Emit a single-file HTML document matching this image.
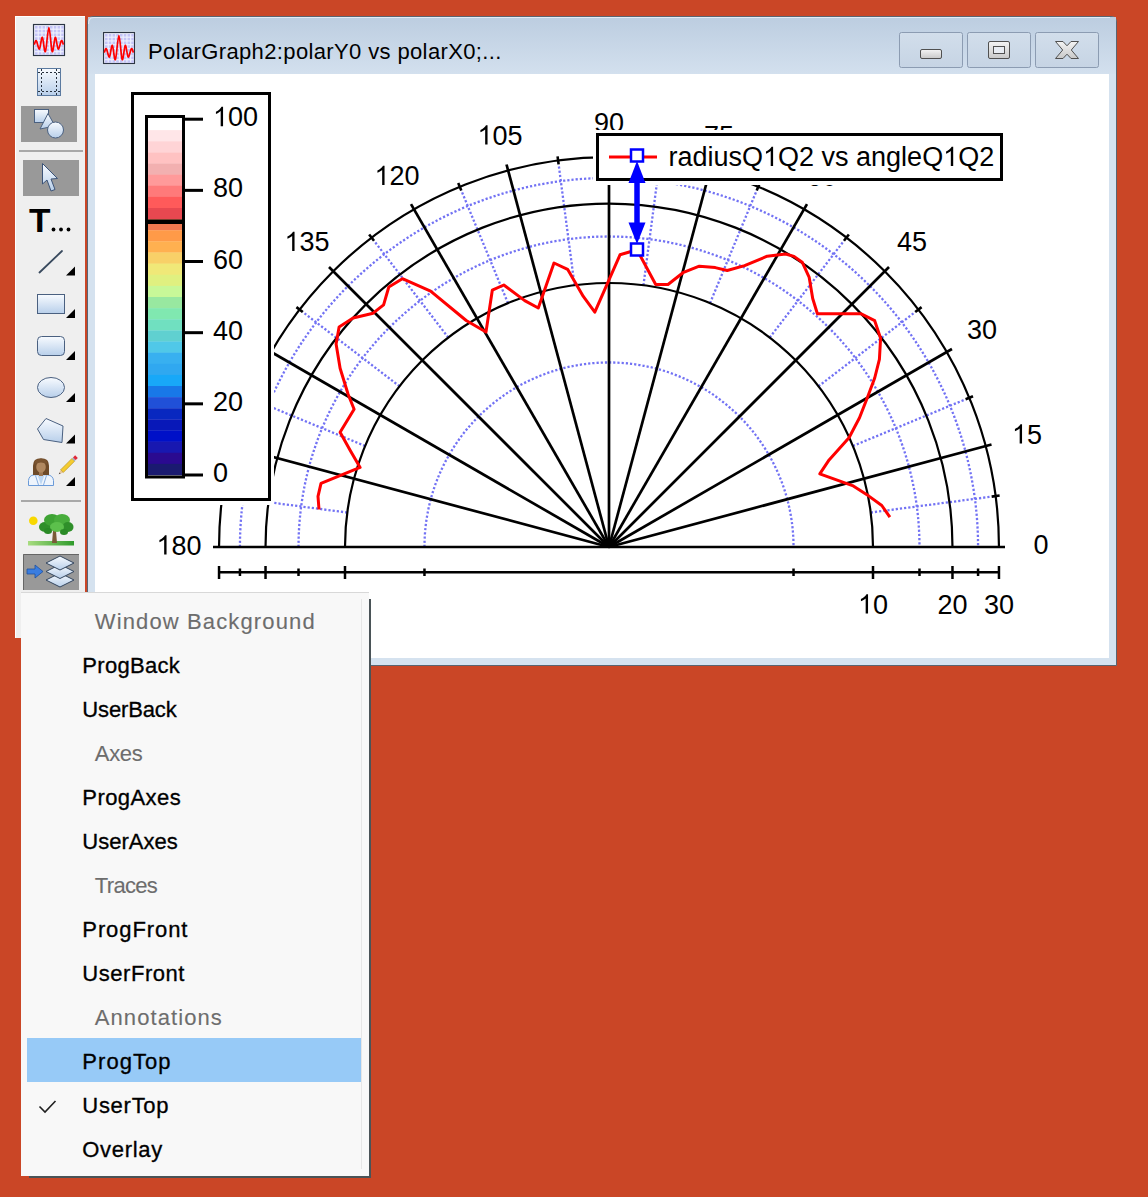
<!DOCTYPE html>
<html><head><meta charset="utf-8"><style>
html,body{margin:0;padding:0;}
body{width:1148px;height:1197px;background:#ca4626;overflow:hidden;position:relative;}
svg{position:absolute;left:0;top:0;}
</style></head><body>
<svg width="1148" height="1197" viewBox="0 0 1148 1197">
<defs><linearGradient id="tb" x1="0" y1="0" x2="0" y2="1"><stop offset="0" stop-color="#bccde0"/><stop offset="1" stop-color="#d3e0ee"/></linearGradient><linearGradient id="btn" x1="0" y1="0" x2="0" y2="1"><stop offset="0" stop-color="#d2deeb"/><stop offset="1" stop-color="#c6d4e4"/></linearGradient><linearGradient id="glyph" x1="0" y1="0" x2="0" y2="1"><stop offset="0" stop-color="#f4f4f4"/><stop offset="1" stop-color="#c8c8c8"/></linearGradient><linearGradient id="ico" x1="0" y1="0" x2="0" y2="1"><stop offset="0" stop-color="#f8fbff"/><stop offset="1" stop-color="#b8cfea"/></linearGradient><clipPath id="client"><rect x="95" y="74" width="1014" height="584"/></clipPath></defs><path d="M87.5,665.5 V22 Q87.5,16.5 93,16.5 H1111 Q1116.5,16.5 1116.5,22 V665.5 Z" fill="#d5e2ef" stroke="#5a6470" stroke-width="1"/><rect x="88" y="17" width="1028" height="57" fill="url(#tb)"/><rect x="95" y="74" width="1014" height="584" fill="#ffffff"/><path d="M88.5,24 Q88.5,17.5 94,17.5 H1110" fill="none" stroke="#ffffff" stroke-width="1" opacity="0.6"/><rect x="102.5" y="31.5" width="33" height="33" fill="#ffffff" opacity="0.7"/><rect x="103.5" y="32.5" width="31" height="31" fill="#eef0fe" stroke="#2c3644" stroke-width="1.2"/><rect x="105.00" y="34.00" width="2.6" height="2.6" fill="#c4c4f6"/><rect x="105.00" y="37.75" width="2.6" height="2.6" fill="#c4c4f6"/><rect x="105.00" y="41.50" width="2.6" height="2.6" fill="#c4c4f6"/><rect x="105.00" y="45.25" width="2.6" height="2.6" fill="#c4c4f6"/><rect x="105.00" y="49.00" width="2.6" height="2.6" fill="#c4c4f6"/><rect x="105.00" y="52.75" width="2.6" height="2.6" fill="#c4c4f6"/><rect x="105.00" y="56.50" width="2.6" height="2.6" fill="#c4c4f6"/><rect x="105.00" y="60.25" width="2.6" height="2.6" fill="#c4c4f6"/><rect x="108.75" y="34.00" width="2.6" height="2.6" fill="#c4c4f6"/><rect x="108.75" y="37.75" width="2.6" height="2.6" fill="#c4c4f6"/><rect x="108.75" y="41.50" width="2.6" height="2.6" fill="#c4c4f6"/><rect x="108.75" y="45.25" width="2.6" height="2.6" fill="#c4c4f6"/><rect x="108.75" y="49.00" width="2.6" height="2.6" fill="#c4c4f6"/><rect x="108.75" y="52.75" width="2.6" height="2.6" fill="#c4c4f6"/><rect x="108.75" y="56.50" width="2.6" height="2.6" fill="#c4c4f6"/><rect x="108.75" y="60.25" width="2.6" height="2.6" fill="#c4c4f6"/><rect x="112.50" y="34.00" width="2.6" height="2.6" fill="#c4c4f6"/><rect x="112.50" y="37.75" width="2.6" height="2.6" fill="#c4c4f6"/><rect x="112.50" y="41.50" width="2.6" height="2.6" fill="#c4c4f6"/><rect x="112.50" y="45.25" width="2.6" height="2.6" fill="#c4c4f6"/><rect x="112.50" y="49.00" width="2.6" height="2.6" fill="#c4c4f6"/><rect x="112.50" y="52.75" width="2.6" height="2.6" fill="#c4c4f6"/><rect x="112.50" y="56.50" width="2.6" height="2.6" fill="#c4c4f6"/><rect x="112.50" y="60.25" width="2.6" height="2.6" fill="#c4c4f6"/><rect x="116.25" y="34.00" width="2.6" height="2.6" fill="#c4c4f6"/><rect x="116.25" y="37.75" width="2.6" height="2.6" fill="#c4c4f6"/><rect x="116.25" y="41.50" width="2.6" height="2.6" fill="#c4c4f6"/><rect x="116.25" y="45.25" width="2.6" height="2.6" fill="#c4c4f6"/><rect x="116.25" y="49.00" width="2.6" height="2.6" fill="#c4c4f6"/><rect x="116.25" y="52.75" width="2.6" height="2.6" fill="#c4c4f6"/><rect x="116.25" y="56.50" width="2.6" height="2.6" fill="#c4c4f6"/><rect x="116.25" y="60.25" width="2.6" height="2.6" fill="#c4c4f6"/><rect x="120.00" y="34.00" width="2.6" height="2.6" fill="#c4c4f6"/><rect x="120.00" y="37.75" width="2.6" height="2.6" fill="#c4c4f6"/><rect x="120.00" y="41.50" width="2.6" height="2.6" fill="#c4c4f6"/><rect x="120.00" y="45.25" width="2.6" height="2.6" fill="#c4c4f6"/><rect x="120.00" y="49.00" width="2.6" height="2.6" fill="#c4c4f6"/><rect x="120.00" y="52.75" width="2.6" height="2.6" fill="#c4c4f6"/><rect x="120.00" y="56.50" width="2.6" height="2.6" fill="#c4c4f6"/><rect x="120.00" y="60.25" width="2.6" height="2.6" fill="#c4c4f6"/><rect x="123.75" y="34.00" width="2.6" height="2.6" fill="#c4c4f6"/><rect x="123.75" y="37.75" width="2.6" height="2.6" fill="#c4c4f6"/><rect x="123.75" y="41.50" width="2.6" height="2.6" fill="#c4c4f6"/><rect x="123.75" y="45.25" width="2.6" height="2.6" fill="#c4c4f6"/><rect x="123.75" y="49.00" width="2.6" height="2.6" fill="#c4c4f6"/><rect x="123.75" y="52.75" width="2.6" height="2.6" fill="#c4c4f6"/><rect x="123.75" y="56.50" width="2.6" height="2.6" fill="#c4c4f6"/><rect x="123.75" y="60.25" width="2.6" height="2.6" fill="#c4c4f6"/><rect x="127.50" y="34.00" width="2.6" height="2.6" fill="#c4c4f6"/><rect x="127.50" y="37.75" width="2.6" height="2.6" fill="#c4c4f6"/><rect x="127.50" y="41.50" width="2.6" height="2.6" fill="#c4c4f6"/><rect x="127.50" y="45.25" width="2.6" height="2.6" fill="#c4c4f6"/><rect x="127.50" y="49.00" width="2.6" height="2.6" fill="#c4c4f6"/><rect x="127.50" y="52.75" width="2.6" height="2.6" fill="#c4c4f6"/><rect x="127.50" y="56.50" width="2.6" height="2.6" fill="#c4c4f6"/><rect x="127.50" y="60.25" width="2.6" height="2.6" fill="#c4c4f6"/><rect x="131.25" y="34.00" width="2.6" height="2.6" fill="#c4c4f6"/><rect x="131.25" y="37.75" width="2.6" height="2.6" fill="#c4c4f6"/><rect x="131.25" y="41.50" width="2.6" height="2.6" fill="#c4c4f6"/><rect x="131.25" y="45.25" width="2.6" height="2.6" fill="#c4c4f6"/><rect x="131.25" y="49.00" width="2.6" height="2.6" fill="#c4c4f6"/><rect x="131.25" y="52.75" width="2.6" height="2.6" fill="#c4c4f6"/><rect x="131.25" y="56.50" width="2.6" height="2.6" fill="#c4c4f6"/><rect x="131.25" y="60.25" width="2.6" height="2.6" fill="#c4c4f6"/><path d="M104.30,52.70 C104.63,52.02 105.45,47.87 106.30,48.60 C107.15,49.33 108.40,57.63 109.40,57.10 C110.40,56.57 111.30,44.98 112.30,45.40 C113.30,45.82 114.30,61.25 115.40,59.60 C116.50,57.95 117.77,35.50 118.90,35.50 C120.03,35.50 121.13,57.95 122.20,59.60 C123.27,61.25 124.30,45.82 125.30,45.40 C126.30,44.98 127.18,56.57 128.20,57.10 C129.22,57.63 130.53,49.33 131.40,48.60 C132.27,47.87 133.07,52.02 133.40,52.70" fill="none" stroke="#ff0000" stroke-width="1.7" stroke-linejoin="round"/><text x="148" y="58.5" font-family='"Liberation Sans", sans-serif' font-size="22" letter-spacing="0.37" fill="#000">PolarGraph2:polarY0 vs polarX0;...</text><rect x="899.5" y="32.5" width="63" height="35" rx="2" fill="url(#btn)" stroke="#8c9cb2" stroke-width="1"/><rect x="967.5" y="32.5" width="63" height="35" rx="2" fill="url(#btn)" stroke="#8c9cb2" stroke-width="1"/><rect x="1035.5" y="32.5" width="63" height="35" rx="2" fill="url(#btn)" stroke="#8c9cb2" stroke-width="1"/><rect x="920.5" y="49.5" width="21" height="9" rx="1.5" fill="url(#glyph)" stroke="#505050" stroke-width="1"/><rect x="988.5" y="41.5" width="21" height="17" rx="1.5" fill="url(#glyph)" stroke="#505050" stroke-width="1"/><rect x="993.5" y="46.5" width="11" height="7" fill="#e8ecf2" stroke="#505050" stroke-width="1"/><path d="M1055.5,41.5 L1063,41.5 L1067,45.8 L1071,41.5 L1078.5,41.5 L1071.3,50 L1078.5,58.5 L1071,58.5 L1067,54.2 L1063,58.5 L1055.5,58.5 L1062.7,50 Z" fill="url(#glyph)" stroke="#505050" stroke-width="1" stroke-linejoin="round"/><g clip-path="url(#client)"><path d="M424.47,547.0 A184.53,184.53 0 0 1 793.53,547.0" fill="none" stroke="#7272f4" stroke-width="2.3" stroke-dasharray="2.2 2"/><path d="M298.51,547.0 A310.49,310.49 0 0 1 919.49,547.0" fill="none" stroke="#7272f4" stroke-width="2.3" stroke-dasharray="2.2 2"/><path d="M239.94,547.0 A369.06,369.06 0 0 1 978.06,547.0" fill="none" stroke="#7272f4" stroke-width="2.3" stroke-dasharray="2.2 2"/><line x1="870.74" y1="512.54" x2="991.7" y2="496.62" stroke="#7272f4" stroke-width="2.3" stroke-dasharray="2.2 2"/><line x1="852.9" y1="445.97" x2="965.62" y2="399.28" stroke="#7272f4" stroke-width="2.3" stroke-dasharray="2.2 2"/><line x1="818.45" y1="386.29" x2="915.23" y2="312.02" stroke="#7272f4" stroke-width="2.3" stroke-dasharray="2.2 2"/><line x1="769.71" y1="337.55" x2="843.98" y2="240.77" stroke="#7272f4" stroke-width="2.3" stroke-dasharray="2.2 2"/><line x1="710.03" y1="303.1" x2="756.72" y2="190.38" stroke="#7272f4" stroke-width="2.3" stroke-dasharray="2.2 2"/><line x1="643.46" y1="285.26" x2="659.38" y2="164.3" stroke="#7272f4" stroke-width="2.3" stroke-dasharray="2.2 2"/><line x1="574.54" y1="285.26" x2="558.62" y2="164.3" stroke="#7272f4" stroke-width="2.3" stroke-dasharray="2.2 2"/><line x1="507.97" y1="303.1" x2="461.28" y2="190.38" stroke="#7272f4" stroke-width="2.3" stroke-dasharray="2.2 2"/><line x1="448.29" y1="337.55" x2="374.02" y2="240.77" stroke="#7272f4" stroke-width="2.3" stroke-dasharray="2.2 2"/><line x1="399.55" y1="386.29" x2="302.77" y2="312.02" stroke="#7272f4" stroke-width="2.3" stroke-dasharray="2.2 2"/><line x1="365.1" y1="445.97" x2="252.38" y2="399.28" stroke="#7272f4" stroke-width="2.3" stroke-dasharray="2.2 2"/><line x1="347.26" y1="512.54" x2="226.3" y2="496.62" stroke="#7272f4" stroke-width="2.3" stroke-dasharray="2.2 2"/><path d="M345,547.0 A264,264 0 0 1 873,547.0" fill="none" stroke="#000" stroke-width="2.2"/><path d="M265.53,547.0 A343.47,343.47 0 0 1 952.47,547.0" fill="none" stroke="#000" stroke-width="2.2"/><path d="M219.04,547.0 A389.96,389.96 0 0 1 998.96,547.0" fill="none" stroke="#000" stroke-width="2.2"/><line x1="609.0" y1="547.0" x2="991.51" y2="444.51" stroke="#000" stroke-width="2.7"/><line x1="609.0" y1="547.0" x2="951.95" y2="349" stroke="#000" stroke-width="2.7"/><line x1="609.0" y1="547.0" x2="889.01" y2="266.99" stroke="#000" stroke-width="2.7"/><line x1="609.0" y1="547.0" x2="807" y2="204.05" stroke="#000" stroke-width="2.7"/><line x1="609.0" y1="547.0" x2="711.49" y2="164.49" stroke="#000" stroke-width="2.7"/><line x1="609.0" y1="547.0" x2="609" y2="151" stroke="#000" stroke-width="2.7"/><line x1="609.0" y1="547.0" x2="506.51" y2="164.49" stroke="#000" stroke-width="2.7"/><line x1="609.0" y1="547.0" x2="411" y2="204.05" stroke="#000" stroke-width="2.7"/><line x1="609.0" y1="547.0" x2="328.99" y2="266.99" stroke="#000" stroke-width="2.7"/><line x1="609.0" y1="547.0" x2="266.05" y2="349" stroke="#000" stroke-width="2.7"/><line x1="609.0" y1="547.0" x2="226.49" y2="444.51" stroke="#000" stroke-width="2.7"/><line x1="213" y1="547.0" x2="1005" y2="547.0" stroke="#000" stroke-width="2.4"/><line x1="991.7" y1="496.62" x2="999.63" y2="495.57" stroke="#000" stroke-width="2.6"/><line x1="965.62" y1="399.28" x2="973.01" y2="396.22" stroke="#000" stroke-width="2.6"/><line x1="915.23" y1="312.02" x2="921.58" y2="307.15" stroke="#000" stroke-width="2.6"/><line x1="843.98" y1="240.77" x2="848.85" y2="234.42" stroke="#000" stroke-width="2.6"/><line x1="756.72" y1="190.38" x2="759.78" y2="182.99" stroke="#000" stroke-width="2.6"/><line x1="659.38" y1="164.3" x2="660.43" y2="156.37" stroke="#000" stroke-width="2.6"/><line x1="558.62" y1="164.3" x2="557.57" y2="156.37" stroke="#000" stroke-width="2.6"/><line x1="461.28" y1="190.38" x2="458.22" y2="182.99" stroke="#000" stroke-width="2.6"/><line x1="374.02" y1="240.77" x2="369.15" y2="234.42" stroke="#000" stroke-width="2.6"/><line x1="302.77" y1="312.02" x2="296.42" y2="307.15" stroke="#000" stroke-width="2.6"/><line x1="252.38" y1="399.28" x2="244.99" y2="396.22" stroke="#000" stroke-width="2.6"/><line x1="226.3" y1="496.62" x2="218.37" y2="495.57" stroke="#000" stroke-width="2.6"/><line x1="219" y1="572.3" x2="999" y2="572.3" stroke="#000" stroke-width="2.6"/><line x1="424.47" y1="568.5" x2="424.47" y2="576" stroke="#000" stroke-width="2.5"/><line x1="793.53" y1="568.5" x2="793.53" y2="576" stroke="#000" stroke-width="2.5"/><line x1="345" y1="566" x2="345" y2="579" stroke="#000" stroke-width="2.5"/><line x1="873" y1="566" x2="873" y2="579" stroke="#000" stroke-width="2.5"/><line x1="298.51" y1="568.5" x2="298.51" y2="576" stroke="#000" stroke-width="2.5"/><line x1="919.49" y1="568.5" x2="919.49" y2="576" stroke="#000" stroke-width="2.5"/><line x1="265.53" y1="566" x2="265.53" y2="579" stroke="#000" stroke-width="2.5"/><line x1="952.47" y1="566" x2="952.47" y2="579" stroke="#000" stroke-width="2.5"/><line x1="239.94" y1="568.5" x2="239.94" y2="576" stroke="#000" stroke-width="2.5"/><line x1="978.06" y1="568.5" x2="978.06" y2="576" stroke="#000" stroke-width="2.5"/><line x1="219.04" y1="566" x2="219.04" y2="579" stroke="#000" stroke-width="2.5"/><line x1="998.96" y1="566" x2="998.96" y2="579" stroke="#000" stroke-width="2.5"/><text x="857.98" y="613.50" font-family='"Liberation Sans", sans-serif' font-size="27" fill="#000" xml:space="preserve"> 0</text><path d="M583,0 L763,0 L763,1466 L646,1466 Q599,1371 487,1270 Q375,1169 223,1104 L223,930 Q307,962 413,1024 Q519,1086 583,1147 Z" fill="#000" transform="translate(857.98,613.50) scale(0.013184,-0.013184)"/><text x="937.46" y="613.50" font-family='"Liberation Sans", sans-serif' font-size="27" fill="#000" xml:space="preserve">20</text><text x="983.94" y="613.50" font-family='"Liberation Sans", sans-serif' font-size="27" fill="#000" xml:space="preserve">30</text><text x="1033.49" y="554.00" font-family='"Liberation Sans", sans-serif' font-size="27" fill="#000" xml:space="preserve">0</text><text x="1011.98" y="443.50" font-family='"Liberation Sans", sans-serif' font-size="27" fill="#000" xml:space="preserve"> 5</text><path d="M583,0 L763,0 L763,1466 L646,1466 Q599,1371 487,1270 Q375,1169 223,1104 L223,930 Q307,962 413,1024 Q519,1086 583,1147 Z" fill="#000" transform="translate(1011.98,443.50) scale(0.013184,-0.013184)"/><text x="966.98" y="339.00" font-family='"Liberation Sans", sans-serif' font-size="27" fill="#000" xml:space="preserve">30</text><text x="896.98" y="251.00" font-family='"Liberation Sans", sans-serif' font-size="27" fill="#000" xml:space="preserve">45</text><text x="806.98" y="186.00" font-family='"Liberation Sans", sans-serif' font-size="27" fill="#000" xml:space="preserve">60</text><text x="703.98" y="145.00" font-family='"Liberation Sans", sans-serif' font-size="27" fill="#000" xml:space="preserve">75</text><text x="593.98" y="132.00" font-family='"Liberation Sans", sans-serif' font-size="27" fill="#000" xml:space="preserve">90</text><text x="477.48" y="144.50" font-family='"Liberation Sans", sans-serif' font-size="27" fill="#000" xml:space="preserve"> 05</text><path d="M583,0 L763,0 L763,1466 L646,1466 Q599,1371 487,1270 Q375,1169 223,1104 L223,930 Q307,962 413,1024 Q519,1086 583,1147 Z" fill="#000" transform="translate(477.48,144.50) scale(0.013184,-0.013184)"/><text x="374.48" y="185.00" font-family='"Liberation Sans", sans-serif' font-size="27" fill="#000" xml:space="preserve"> 20</text><path d="M583,0 L763,0 L763,1466 L646,1466 Q599,1371 487,1270 Q375,1169 223,1104 L223,930 Q307,962 413,1024 Q519,1086 583,1147 Z" fill="#000" transform="translate(374.48,185.00) scale(0.013184,-0.013184)"/><text x="284.48" y="251.00" font-family='"Liberation Sans", sans-serif' font-size="27" fill="#000" xml:space="preserve"> 35</text><path d="M583,0 L763,0 L763,1466 L646,1466 Q599,1371 487,1270 Q375,1169 223,1104 L223,930 Q307,962 413,1024 Q519,1086 583,1147 Z" fill="#000" transform="translate(284.48,251.00) scale(0.013184,-0.013184)"/><text x="156.48" y="554.50" font-family='"Liberation Sans", sans-serif' font-size="27" fill="#000" xml:space="preserve"> 80</text><path d="M583,0 L763,0 L763,1466 L646,1466 Q599,1371 487,1270 Q375,1169 223,1104 L223,930 Q307,962 413,1024 Q519,1086 583,1147 Z" fill="#000" transform="translate(156.48,554.50) scale(0.013184,-0.013184)"/><polyline points="889.9,517.2 881.8,505.5 868.9,496.1 852.5,485.6 819.8,473.9 829.1,459.9 849,437.7 859.5,417.8 867.7,396.7 874.7,378 879.4,359.3 880.6,338.2 874.7,320.7 860.7,313.7 817.4,313.7 812.7,298.5 809.2,277.4 802.2,262.2 794,256.4 785.5,254 767.2,256.2 744.6,265.6 727.2,270.5 715.3,267.6 699.3,266.2 683.6,272.3 668,284.5 655.7,284.5 637,249.7 620,254.8 594.8,312.1 583.3,296.4 567.6,269.3 554,263 538.3,308 524.7,300.6 503.8,285 492.3,290.2 486,332 466.2,320.5 430.6,291.2 402.4,278.7 388.8,287 383.6,304.8 373.1,313.2 353.1,318 339.1,327.1 336.1,344.1 340.1,368.2 348.1,394.2 354.1,409.3 340.1,432.3 350.1,450.3 360.1,467.4 321,483.4 318,496.4 319,509.5" fill="none" stroke="#ff0000" stroke-width="3" stroke-linejoin="round"/><rect x="593" y="130" width="413" height="55" fill="#fff"/><rect x="597.5" y="134.5" width="404" height="45" fill="#fff" stroke="#000" stroke-width="3"/><line x1="609" y1="157" x2="657" y2="157" stroke="#ff0000" stroke-width="3"/><text x="668.50" y="166.00" font-family='"Liberation Sans", sans-serif' font-size="27" fill="#000" xml:space="preserve">radiusQ Q2 vs angleQ Q2</text><path d="M583,0 L763,0 L763,1466 L646,1466 Q599,1371 487,1270 Q375,1169 223,1104 L223,930 Q307,962 413,1024 Q519,1086 583,1147 Z" fill="#000" transform="translate(763.04,166.00) scale(0.013184,-0.013184)"/><path d="M583,0 L763,0 L763,1466 L646,1466 Q599,1371 487,1270 Q375,1169 223,1104 L223,930 Q307,962 413,1024 Q519,1086 583,1147 Z" fill="#000" transform="translate(943.14,166.00) scale(0.013184,-0.013184)"/><line x1="637" y1="175" x2="637" y2="230" stroke="#0000ff" stroke-width="5.5"/><path d="M637,161 L645.5,183 L628.5,183 Z" fill="#0000ff"/><path d="M637,244 L645.5,222.5 L628.5,222.5 Z" fill="#0000ff"/><rect x="631" y="149.5" width="12" height="12" fill="#fff" stroke="#0000ff" stroke-width="2.5"/><rect x="631" y="243.5" width="12" height="12" fill="#fff" stroke="#0000ff" stroke-width="2.5"/><rect x="128" y="89" width="146" height="416" fill="#fff"/><rect x="132.5" y="93.5" width="137" height="406" fill="#fff" stroke="#000" stroke-width="3"/><rect x="148" y="119" width="34" height="11.43" fill="#ffffff"/><rect x="148" y="130.12" width="34" height="11.43" fill="#ffe6e8"/><rect x="148" y="141.25" width="34" height="11.43" fill="#ffd4d6"/><rect x="148" y="152.38" width="34" height="11.43" fill="#ffc2c2"/><rect x="148" y="163.5" width="34" height="11.43" fill="#f2b0b0"/><rect x="148" y="174.62" width="34" height="11.43" fill="#ff9a9a"/><rect x="148" y="185.75" width="34" height="11.43" fill="#ff7a7a"/><rect x="148" y="196.88" width="34" height="11.43" fill="#ff5a5a"/><rect x="148" y="208" width="34" height="11.43" fill="#e84850"/><rect x="148" y="219.12" width="34" height="11.43" fill="#f07850"/><rect x="148" y="230.25" width="34" height="11.43" fill="#ff9a48"/><rect x="148" y="241.38" width="34" height="11.43" fill="#ffb050"/><rect x="148" y="252.5" width="34" height="11.43" fill="#f8d068"/><rect x="148" y="263.62" width="34" height="11.43" fill="#f0e878"/><rect x="148" y="274.75" width="34" height="11.43" fill="#e0f080"/><rect x="148" y="285.88" width="34" height="11.43" fill="#c8f898"/><rect x="148" y="297" width="34" height="11.43" fill="#98e8a0"/><rect x="148" y="308.12" width="34" height="11.43" fill="#80e8b0"/><rect x="148" y="319.25" width="34" height="11.43" fill="#70e0c0"/><rect x="148" y="330.38" width="34" height="11.43" fill="#60d0d0"/><rect x="148" y="341.5" width="34" height="11.43" fill="#50c8e8"/><rect x="148" y="352.62" width="34" height="11.43" fill="#38b0f0"/><rect x="148" y="363.75" width="34" height="11.43" fill="#30a8f0"/><rect x="148" y="374.88" width="34" height="11.43" fill="#18a8f8"/><rect x="148" y="386" width="34" height="11.43" fill="#1878e8"/><rect x="148" y="397.12" width="34" height="11.43" fill="#2050d8"/><rect x="148" y="408.25" width="34" height="11.43" fill="#0828c0"/><rect x="148" y="419.38" width="34" height="11.43" fill="#0818b8"/><rect x="148" y="430.5" width="34" height="11.43" fill="#0010c8"/><rect x="148" y="441.62" width="34" height="11.43" fill="#1818b0"/><rect x="148" y="452.75" width="34" height="11.43" fill="#2a0a90"/><rect x="148" y="463.88" width="34" height="11.43" fill="#1a1a70"/><rect x="148" y="219.5" width="34" height="4.5" fill="#000"/><rect x="146.5" y="116.5" width="37" height="360.5" fill="none" stroke="#000" stroke-width="3"/><line x1="184" y1="119.2" x2="203" y2="119.2" stroke="#000" stroke-width="3"/><text x="213.00" y="126.20" font-family='"Liberation Sans", sans-serif' font-size="27" fill="#000" xml:space="preserve"> 00</text><path d="M583,0 L763,0 L763,1466 L646,1466 Q599,1371 487,1270 Q375,1169 223,1104 L223,930 Q307,962 413,1024 Q519,1086 583,1147 Z" fill="#000" transform="translate(213.00,126.20) scale(0.013184,-0.013184)"/><line x1="184" y1="190.36" x2="203" y2="190.36" stroke="#000" stroke-width="3"/><text x="213.00" y="197.36" font-family='"Liberation Sans", sans-serif' font-size="27" fill="#000" xml:space="preserve">80</text><line x1="184" y1="261.52" x2="203" y2="261.52" stroke="#000" stroke-width="3"/><text x="213.00" y="268.52" font-family='"Liberation Sans", sans-serif' font-size="27" fill="#000" xml:space="preserve">60</text><line x1="184" y1="332.68" x2="203" y2="332.68" stroke="#000" stroke-width="3"/><text x="213.00" y="339.68" font-family='"Liberation Sans", sans-serif' font-size="27" fill="#000" xml:space="preserve">40</text><line x1="184" y1="403.84" x2="203" y2="403.84" stroke="#000" stroke-width="3"/><text x="213.00" y="410.84" font-family='"Liberation Sans", sans-serif' font-size="27" fill="#000" xml:space="preserve">20</text><line x1="184" y1="475" x2="203" y2="475" stroke="#000" stroke-width="3"/><text x="213.00" y="482.00" font-family='"Liberation Sans", sans-serif' font-size="27" fill="#000" xml:space="preserve">0</text></g><rect x="15" y="16" width="70" height="622" fill="#efefef"/><rect x="15" y="16" width="70" height="1" fill="#ffffff"/><rect x="15" y="16" width="1" height="622" fill="#ffffff"/><rect x="32.5" y="23.5" width="33" height="33" fill="#ffffff" opacity="0.7"/><rect x="33.5" y="24.5" width="31" height="31" fill="#eef0fe" stroke="#2c3644" stroke-width="1.2"/><rect x="35.00" y="26.00" width="2.6" height="2.6" fill="#c4c4f6"/><rect x="35.00" y="29.75" width="2.6" height="2.6" fill="#c4c4f6"/><rect x="35.00" y="33.50" width="2.6" height="2.6" fill="#c4c4f6"/><rect x="35.00" y="37.25" width="2.6" height="2.6" fill="#c4c4f6"/><rect x="35.00" y="41.00" width="2.6" height="2.6" fill="#c4c4f6"/><rect x="35.00" y="44.75" width="2.6" height="2.6" fill="#c4c4f6"/><rect x="35.00" y="48.50" width="2.6" height="2.6" fill="#c4c4f6"/><rect x="35.00" y="52.25" width="2.6" height="2.6" fill="#c4c4f6"/><rect x="38.75" y="26.00" width="2.6" height="2.6" fill="#c4c4f6"/><rect x="38.75" y="29.75" width="2.6" height="2.6" fill="#c4c4f6"/><rect x="38.75" y="33.50" width="2.6" height="2.6" fill="#c4c4f6"/><rect x="38.75" y="37.25" width="2.6" height="2.6" fill="#c4c4f6"/><rect x="38.75" y="41.00" width="2.6" height="2.6" fill="#c4c4f6"/><rect x="38.75" y="44.75" width="2.6" height="2.6" fill="#c4c4f6"/><rect x="38.75" y="48.50" width="2.6" height="2.6" fill="#c4c4f6"/><rect x="38.75" y="52.25" width="2.6" height="2.6" fill="#c4c4f6"/><rect x="42.50" y="26.00" width="2.6" height="2.6" fill="#c4c4f6"/><rect x="42.50" y="29.75" width="2.6" height="2.6" fill="#c4c4f6"/><rect x="42.50" y="33.50" width="2.6" height="2.6" fill="#c4c4f6"/><rect x="42.50" y="37.25" width="2.6" height="2.6" fill="#c4c4f6"/><rect x="42.50" y="41.00" width="2.6" height="2.6" fill="#c4c4f6"/><rect x="42.50" y="44.75" width="2.6" height="2.6" fill="#c4c4f6"/><rect x="42.50" y="48.50" width="2.6" height="2.6" fill="#c4c4f6"/><rect x="42.50" y="52.25" width="2.6" height="2.6" fill="#c4c4f6"/><rect x="46.25" y="26.00" width="2.6" height="2.6" fill="#c4c4f6"/><rect x="46.25" y="29.75" width="2.6" height="2.6" fill="#c4c4f6"/><rect x="46.25" y="33.50" width="2.6" height="2.6" fill="#c4c4f6"/><rect x="46.25" y="37.25" width="2.6" height="2.6" fill="#c4c4f6"/><rect x="46.25" y="41.00" width="2.6" height="2.6" fill="#c4c4f6"/><rect x="46.25" y="44.75" width="2.6" height="2.6" fill="#c4c4f6"/><rect x="46.25" y="48.50" width="2.6" height="2.6" fill="#c4c4f6"/><rect x="46.25" y="52.25" width="2.6" height="2.6" fill="#c4c4f6"/><rect x="50.00" y="26.00" width="2.6" height="2.6" fill="#c4c4f6"/><rect x="50.00" y="29.75" width="2.6" height="2.6" fill="#c4c4f6"/><rect x="50.00" y="33.50" width="2.6" height="2.6" fill="#c4c4f6"/><rect x="50.00" y="37.25" width="2.6" height="2.6" fill="#c4c4f6"/><rect x="50.00" y="41.00" width="2.6" height="2.6" fill="#c4c4f6"/><rect x="50.00" y="44.75" width="2.6" height="2.6" fill="#c4c4f6"/><rect x="50.00" y="48.50" width="2.6" height="2.6" fill="#c4c4f6"/><rect x="50.00" y="52.25" width="2.6" height="2.6" fill="#c4c4f6"/><rect x="53.75" y="26.00" width="2.6" height="2.6" fill="#c4c4f6"/><rect x="53.75" y="29.75" width="2.6" height="2.6" fill="#c4c4f6"/><rect x="53.75" y="33.50" width="2.6" height="2.6" fill="#c4c4f6"/><rect x="53.75" y="37.25" width="2.6" height="2.6" fill="#c4c4f6"/><rect x="53.75" y="41.00" width="2.6" height="2.6" fill="#c4c4f6"/><rect x="53.75" y="44.75" width="2.6" height="2.6" fill="#c4c4f6"/><rect x="53.75" y="48.50" width="2.6" height="2.6" fill="#c4c4f6"/><rect x="53.75" y="52.25" width="2.6" height="2.6" fill="#c4c4f6"/><rect x="57.50" y="26.00" width="2.6" height="2.6" fill="#c4c4f6"/><rect x="57.50" y="29.75" width="2.6" height="2.6" fill="#c4c4f6"/><rect x="57.50" y="33.50" width="2.6" height="2.6" fill="#c4c4f6"/><rect x="57.50" y="37.25" width="2.6" height="2.6" fill="#c4c4f6"/><rect x="57.50" y="41.00" width="2.6" height="2.6" fill="#c4c4f6"/><rect x="57.50" y="44.75" width="2.6" height="2.6" fill="#c4c4f6"/><rect x="57.50" y="48.50" width="2.6" height="2.6" fill="#c4c4f6"/><rect x="57.50" y="52.25" width="2.6" height="2.6" fill="#c4c4f6"/><rect x="61.25" y="26.00" width="2.6" height="2.6" fill="#c4c4f6"/><rect x="61.25" y="29.75" width="2.6" height="2.6" fill="#c4c4f6"/><rect x="61.25" y="33.50" width="2.6" height="2.6" fill="#c4c4f6"/><rect x="61.25" y="37.25" width="2.6" height="2.6" fill="#c4c4f6"/><rect x="61.25" y="41.00" width="2.6" height="2.6" fill="#c4c4f6"/><rect x="61.25" y="44.75" width="2.6" height="2.6" fill="#c4c4f6"/><rect x="61.25" y="48.50" width="2.6" height="2.6" fill="#c4c4f6"/><rect x="61.25" y="52.25" width="2.6" height="2.6" fill="#c4c4f6"/><path d="M34.30,44.70 C34.63,44.02 35.45,39.87 36.30,40.60 C37.15,41.33 38.40,49.63 39.40,49.10 C40.40,48.57 41.30,36.98 42.30,37.40 C43.30,37.82 44.30,53.25 45.40,51.60 C46.50,49.95 47.77,27.50 48.90,27.50 C50.03,27.50 51.13,49.95 52.20,51.60 C53.27,53.25 54.30,37.82 55.30,37.40 C56.30,36.98 57.18,48.57 58.20,49.10 C59.22,49.63 60.53,41.33 61.40,40.60 C62.27,39.87 63.07,44.02 63.40,44.70" fill="none" stroke="#ff0000" stroke-width="1.7" stroke-linejoin="round"/><rect x="37.5" y="68.5" width="23" height="27" fill="url(#ico)" stroke="#5b7aa0" stroke-width="1"/><path d="M38,72.5 H60 M38,91.5 H60 M41.5,69 V95 M56.5,69 V95" stroke="#28323e" stroke-width="1" stroke-dasharray="2 2" fill="none"/><rect x="21" y="106" width="56" height="36" fill="#999999"/><rect x="23" y="160" width="56" height="36" fill="#999999"/><rect x="23" y="554" width="56" height="36" fill="#999999"/><path d="M23.5,590 V554.5 H79" stroke="#666" stroke-width="1" fill="none"/><rect x="34.5" y="109.5" width="14" height="13" fill="url(#ico)" stroke="#4a6080" stroke-width="1"/><path d="M48,113.5 L55,126 L40,129 Z" fill="url(#ico)" stroke="#4a6080" stroke-width="1"/><circle cx="55.5" cy="130" r="8" fill="url(#ico)" stroke="#4a6080" stroke-width="1"/><rect x="19" y="150" width="64" height="2" fill="#a8a8a8"/><rect x="21" y="500" width="60" height="2" fill="#a8a8a8"/><path d="M42.5,163.5 L42.5,184 L47,180 L51,191 L55,189.5 L51,179 L57.5,178.5 Z" fill="url(#ico)" stroke="#3c5478" stroke-width="1" stroke-linejoin="round"/><text x="29" y="231.6" font-family='"Liberation Sans", sans-serif' font-size="32.5" font-weight="bold" fill="#000" transform="translate(29,0) scale(1.08,1) translate(-29,0)">T</text><circle cx="53.5" cy="229.5" r="1.9" fill="#000"/><circle cx="61" cy="229.5" r="1.9" fill="#000"/><circle cx="68.5" cy="229.5" r="1.9" fill="#000"/><line x1="39.5" y1="272.5" x2="62" y2="251" stroke="#394a5e" stroke-width="1.8" stroke-linecap="round"/><path d="M75,266.5 L75,275.5 L66,275.5 Z" fill="#000"/><path d="M75,309 L75,318 L66,318 Z" fill="#000"/><path d="M75,351 L75,360 L66,360 Z" fill="#000"/><path d="M75,393 L75,402 L66,402 Z" fill="#000"/><path d="M75,434.5 L75,443.5 L66,443.5 Z" fill="#000"/><path d="M75,477 L75,486 L66,486 Z" fill="#000"/><rect x="37.5" y="294.5" width="27" height="19" fill="url(#ico)" stroke="#4a6080" stroke-width="1"/><rect x="37.5" y="336.5" width="27" height="19" rx="4" fill="url(#ico)" stroke="#4a6080" stroke-width="1"/><ellipse cx="51" cy="387.5" rx="13.5" ry="10" fill="url(#ico)" stroke="#4a6080" stroke-width="1"/><path d="M46,418.5 L63,426 L62,442.5 L43.5,439.5 L37.5,429 Z" fill="url(#ico)" stroke="#4a6080" stroke-width="1" stroke-linejoin="round"/><path d="M28.5,485.5 L28.5,480.5 Q29,475.5 34,474.8 L47.5,474.8 Q53,475.5 53.5,480.5 L53.5,485.5 Z" fill="#eef4fc" stroke="#6a9ad8" stroke-width="1"/><path d="M37.5,475 L41,485 L44.5,475 Z" fill="#bcd6f2"/><path d="M35.5,475.5 L38.5,485 M46.5,475.5 L43.5,485" stroke="#7aa6dc" stroke-width="0.9" fill="none"/><path d="M33,475 L33,465.5 Q33,458.2 41,458.2 Q49,458.2 49,465.5 L49,475 Z" fill="#6e4a28"/><rect x="39" y="471" width="4" height="5" fill="#9c7450"/><ellipse cx="41" cy="467" rx="4.8" ry="5.8" fill="#b08860"/><path d="M34.5,461 Q41,456.5 47.5,461 L47,464 Q41,461 35,464 Z" fill="#7a5430"/><polygon points="58.80,474.30 63.33,472.46 60.64,469.77" fill="#e8c8a0"/><polygon points="58.80,474.30 60.61,473.56 59.54,472.49" fill="#404040"/><polygon points="63.33,472.46 74.64,461.15 71.95,458.46 60.64,469.77" fill="#f4cc30" stroke="#b08a20" stroke-width="0.6"/><polygon points="74.64,461.15 75.70,460.09 73.01,457.40 71.95,458.46" fill="#a0b0c0"/><polygon points="75.70,460.09 77.82,457.97 75.13,455.28 73.01,457.40" fill="#e02838"/><circle cx="33.3" cy="520.7" r="4.3" fill="#f8d800"/><defs><linearGradient id="grass" x1="0" y1="0" x2="1" y2="0"><stop offset="0" stop-color="#a8dc80"/><stop offset="1" stop-color="#2e9a2a"/></linearGradient></defs><rect x="28" y="541" width="46" height="4.5" fill="url(#grass)"/><path d="M52,543 L53,531 L49,527 L51,526 L54,529 L57,525 L58.5,526 L56,531 L57,543 Z" fill="#7a5a38"/><ellipse cx="45" cy="527" rx="6" ry="5" fill="#2f8f2a"/><ellipse cx="52" cy="520" rx="8" ry="6" fill="#3ea334"/><ellipse cx="62" cy="520" rx="8" ry="6" fill="#48ad3c"/><ellipse cx="68" cy="527" rx="5.5" ry="5" fill="#2f8f2a"/><ellipse cx="57" cy="527" rx="7" ry="5" fill="#5cc04c"/><ellipse cx="48" cy="531" rx="4" ry="3" fill="#2a8a26"/><ellipse cx="64" cy="532" rx="4" ry="3" fill="#2a8a26"/><path d="M27,569 L35,569 L35,565 L43,571.5 L35,578 L35,574 L27,574 Z" fill="#3a7de0" stroke="#2050a0" stroke-width="0.8"/><path d="M46,580 L60,573 L74,580 L60,587 Z" fill="url(#ico)" stroke="#34465e" stroke-width="1"/><path d="M46,571.5 L60,564.5 L74,571.5 L60,578.5 Z" fill="url(#ico)" stroke="#34465e" stroke-width="1"/><path d="M46,563 L60,556 L74,563 L60,570 Z" fill="url(#ico)" stroke="#34465e" stroke-width="1"/>
<rect x="21" y="592" width="348" height="584" fill="#f8f8f8"/><rect x="21" y="592" width="348" height="1" fill="#d8d8d8"/><rect x="369" y="599" width="2" height="579" fill="#4a5357"/><rect x="29" y="1176" width="342" height="2" fill="#4a5357"/><rect x="361" y="599" width="1" height="570" fill="#e6e6e6"/><rect x="27" y="1038" width="334" height="44" fill="#97caf7"/><text x="94.8" y="629.4" font-family='"Liberation Sans", sans-serif' font-size="22" letter-spacing="1.13" fill="#6d6d6d" stroke="#6d6d6d" stroke-width="0.12">Window Background</text><text x="82.3" y="673.4" font-family='"Liberation Sans", sans-serif' font-size="22" letter-spacing="0.29" fill="#000000" stroke="#000000" stroke-width="0.32">ProgBack</text><text x="82.3" y="717.4" font-family='"Liberation Sans", sans-serif' font-size="22" letter-spacing="-0.14" fill="#000000" stroke="#000000" stroke-width="0.32">UserBack</text><text x="94.8" y="761.4" font-family='"Liberation Sans", sans-serif' font-size="22" letter-spacing="-0.3" fill="#6d6d6d" stroke="#6d6d6d" stroke-width="0.12">Axes</text><text x="82.3" y="805.4" font-family='"Liberation Sans", sans-serif' font-size="22" letter-spacing="0.43" fill="#000000" stroke="#000000" stroke-width="0.32">ProgAxes</text><text x="82.3" y="849.4" font-family='"Liberation Sans", sans-serif' font-size="22" letter-spacing="0.01" fill="#000000" stroke="#000000" stroke-width="0.32">UserAxes</text><text x="94.8" y="893.4" font-family='"Liberation Sans", sans-serif' font-size="22" letter-spacing="-0.68" fill="#6d6d6d" stroke="#6d6d6d" stroke-width="0.12">Traces</text><text x="82.3" y="937.4" font-family='"Liberation Sans", sans-serif' font-size="22" letter-spacing="0.91" fill="#000000" stroke="#000000" stroke-width="0.32">ProgFront</text><text x="82.3" y="981.4" font-family='"Liberation Sans", sans-serif' font-size="22" letter-spacing="0.54" fill="#000000" stroke="#000000" stroke-width="0.32">UserFront</text><text x="94.8" y="1025.4" font-family='"Liberation Sans", sans-serif' font-size="22" letter-spacing="1.08" fill="#6d6d6d" stroke="#6d6d6d" stroke-width="0.12">Annotations</text><text x="82.3" y="1069.4" font-family='"Liberation Sans", sans-serif' font-size="22" letter-spacing="1.05" fill="#000000" stroke="#000000" stroke-width="0.32">ProgTop</text><text x="82.3" y="1113.4" font-family='"Liberation Sans", sans-serif' font-size="22" letter-spacing="0.72" fill="#000000" stroke="#000000" stroke-width="0.32">UserTop</text><text x="82.3" y="1157.4" font-family='"Liberation Sans", sans-serif' font-size="22" letter-spacing="0.7" fill="#000000" stroke="#000000" stroke-width="0.32">Overlay</text><path d="M39.5,1106.5 L45,1112 L55.5,1101" fill="none" stroke="#202020" stroke-width="1.6"/>
</svg>
</body></html>
